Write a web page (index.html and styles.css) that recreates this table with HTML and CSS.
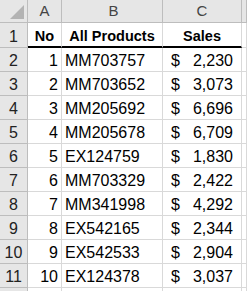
FILE: index.html
```html
<!DOCTYPE html>
<html lang="en">
  <head>
    <meta charset="UTF-8" />
    <title>Sales sheet</title>
    <link rel="stylesheet" href="styles.css">
  </head>
  <body>
    <div class="sheet">
      <div class="row head-row">
        <div class="cell rh corner">
          <svg width="27" height="22" viewBox="0 0 27 22">
            <polygon points="24,5 24,19 10,19" fill="#b3b3b3" />
          </svg>
        </div>
        <div class="cell ch col-a">A</div>
        <div class="cell ch col-b">B</div>
        <div class="cell ch col-c">C</div>
        <div class="cell ch col-d"></div>
      </div>

      <div class="row title-row">
        <div class="cell rh">1</div>
        <div class="cell col-a th">No</div>
        <div class="cell col-b th">All Products</div>
        <div class="cell col-c th">Sales</div>
        <div class="cell col-d"></div>
      </div>

      <div class="row">
        <div class="cell rh">2</div>
        <div class="cell col-a num">1</div>
        <div class="cell col-b">MM703757</div>
        <div class="cell col-c money"><span>$</span><span>2,230</span></div>
        <div class="cell col-d"></div>
      </div>
      <div class="row">
        <div class="cell rh">3</div>
        <div class="cell col-a num">2</div>
        <div class="cell col-b">MM703652</div>
        <div class="cell col-c money"><span>$</span><span>3,073</span></div>
        <div class="cell col-d"></div>
      </div>
      <div class="row">
        <div class="cell rh">4</div>
        <div class="cell col-a num">3</div>
        <div class="cell col-b">MM205692</div>
        <div class="cell col-c money"><span>$</span><span>6,696</span></div>
        <div class="cell col-d"></div>
      </div>
      <div class="row">
        <div class="cell rh">5</div>
        <div class="cell col-a num">4</div>
        <div class="cell col-b">MM205678</div>
        <div class="cell col-c money"><span>$</span><span>6,709</span></div>
        <div class="cell col-d"></div>
      </div>
      <div class="row">
        <div class="cell rh">6</div>
        <div class="cell col-a num">5</div>
        <div class="cell col-b">EX124759</div>
        <div class="cell col-c money"><span>$</span><span>1,830</span></div>
        <div class="cell col-d"></div>
      </div>
      <div class="row">
        <div class="cell rh">7</div>
        <div class="cell col-a num">6</div>
        <div class="cell col-b">MM703329</div>
        <div class="cell col-c money"><span>$</span><span>2,422</span></div>
        <div class="cell col-d"></div>
      </div>
      <div class="row">
        <div class="cell rh">8</div>
        <div class="cell col-a num">7</div>
        <div class="cell col-b">MM341998</div>
        <div class="cell col-c money"><span>$</span><span>4,292</span></div>
        <div class="cell col-d"></div>
      </div>
      <div class="row">
        <div class="cell rh">9</div>
        <div class="cell col-a num">8</div>
        <div class="cell col-b">EX542165</div>
        <div class="cell col-c money"><span>$</span><span>2,344</span></div>
        <div class="cell col-d"></div>
      </div>
      <div class="row">
        <div class="cell rh">10</div>
        <div class="cell col-a num">9</div>
        <div class="cell col-b">EX542533</div>
        <div class="cell col-c money"><span>$</span><span>2,904</span></div>
        <div class="cell col-d"></div>
      </div>
      <div class="row">
        <div class="cell rh">11</div>
        <div class="cell col-a num">10</div>
        <div class="cell col-b">EX124378</div>
        <div class="cell col-c money"><span>$</span><span>3,037</span></div>
        <div class="cell col-d"></div>
      </div>
      <div class="row">
        <div class="cell rh"></div>
        <div class="cell col-a"></div>
        <div class="cell col-b"></div>
        <div class="cell col-c"></div>
        <div class="cell col-d"></div>
      </div>
    </div>
  </body>
</html>
```

FILE: styles.css
```css
:root {
  --head-bg: #e6e6e6;
  --head-line: #bdbdbd;
  --grid: #d9d9d9;
  --ink: #000;
}

* {
  box-sizing: border-box;
  margin: 0;
  padding: 0;
}

body {
  background: #fff;
  font-family: "Liberation Sans", Arial, sans-serif;
  font-size: 16px;
  color: var(--ink);
  overflow: hidden;
}

/* the visible window of the sheet */
.sheet {
  width: 100vw;
  height: 100vh;
  overflow: hidden;
}

.row {
  display: flex;
  height: 24px;
}

.head-row {
  height: 23px;
}

.title-row {
  height: 25px;
}

.cell {
  display: flex;
  flex-shrink: 0;
  align-items: flex-end;
  line-height: 20px;
  border-right: 1px solid var(--grid);
  border-bottom: 1px solid var(--grid);
  white-space: nowrap;
  overflow: hidden;
}

.rh {
  width: 28px;
  justify-content: center;
  background: var(--head-bg);
  border-color: var(--head-line);
  color: #222;
}

.corner {
  align-items: stretch;
}

.ch {
  align-items: center;
  justify-content: center;
  line-height: 22px;
  background: var(--head-bg);
  border-color: var(--head-line);
  color: #444;
  font-size: 15px;
}

.col-a {
  width: 34px;
}

.col-b {
  width: 101px;
  padding-left: 3px;
}

.col-c {
  width: 79px;
}

.col-d {
  flex: 1 1 auto;
  flex-shrink: 1;
}

.title-row .th {
  border-bottom: 2px solid #000;
  justify-content: center;
  font-weight: bold;
  font-size: 14.5px;
  padding-left: 0;
}

.num {
  justify-content: flex-end;
  padding-right: 3px;
}

.money {
  justify-content: space-between;
  padding: 0 8px;
}
```
